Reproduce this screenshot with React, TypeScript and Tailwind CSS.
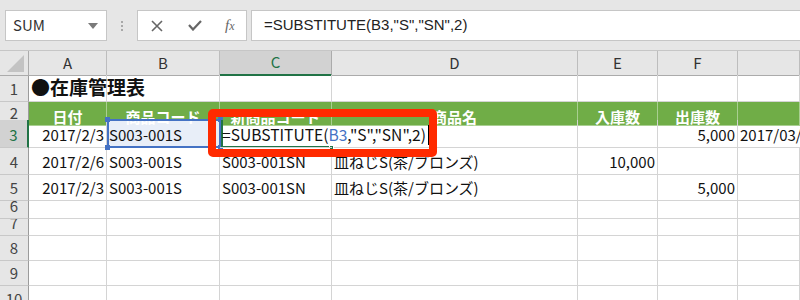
import React from 'react';

const font = { fontFamily: '"Noto Sans CJK JP", "Noto Sans", sans-serif' };

const cols = 'grid grid-cols-[29px_78px_113px_112px_246px_80px_80px_1fr]';

type Cell = { text?: React.ReactNode; align?: 'left' | 'right' | 'center'; cls?: string };

const Row = ({
  label,
  h,
  cells,
  selected,
  green,
}: {
  label: string;
  h: string;
  cells: Cell[];
  selected?: boolean;
  green?: boolean;
}) => (
  <div className={`${cols} ${h}`}>
    <div
      className={`flex items-end justify-center overflow-hidden border-b border-b-[#c8c8c8] text-[15px] leading-[22px] text-[#444] ${
        selected ? 'bg-[#d2d2d2] border-r-2 border-r-[#217346] text-[#217346]' : 'bg-[#e6e6e6] border-r border-r-[#9b9b9b]'
      }`}
    >
      <span className="pb-[1px]">{label}</span>
    </div>
    {Array.from({ length: 7 }).map((_, i) => {
      const c = cells[i] || {};
      const align = c.align === 'right' ? 'justify-end pr-[2px]' : c.align === 'center' ? 'justify-center' : 'justify-start pl-[2px]';
      return (
        <div
          key={i}
          className={`flex items-end whitespace-nowrap border-b border-r ${
            green ? 'border-[#a9cf91] bg-[#70ad47] font-bold text-white' : 'border-[#d4d4d4] text-[#111]'
          } ${align} ${c.cls || ''}`}
        >
          <span className="pb-[1px] leading-[22px]">{c.text}</span>
        </div>
      );
    })}
  </div>
);

export default function App() {
  return (
    <div className="relative h-[300px] w-[800px] overflow-hidden bg-white text-[15px]" style={font}>
      {/* toolbar */}
      <div className="flex h-[51px] items-center gap-[4px] border-b border-[#c6c6c6] bg-[#e6e6e6] pl-[5px] pt-[1px]">
        <div className="flex h-[31px] w-[102px] items-center justify-between border border-[#c6c6c6] bg-white pl-[7px] pr-[8px] text-[15px] text-[#333]">
          <span>SUM</span>
          <svg width="10" height="6" viewBox="0 0 10 6">
            <path d="M0 0 L10 0 L5 6 Z" fill="#7a7a7a" />
          </svg>
        </div>
        <div className="flex w-[22px] flex-col items-center gap-[2px]">
          <span className="h-[2px] w-[2px] bg-[#a8a8a8]" />
          <span className="h-[2px] w-[2px] bg-[#a8a8a8]" />
          <span className="h-[2px] w-[2px] bg-[#a8a8a8]" />
        </div>
        <div className="flex h-[31px] w-[110px] items-center border border-[#c6c6c6] bg-white text-[#666]">
          <svg className="ml-[13px]" width="12" height="12" viewBox="0 0 12 12">
            <path d="M1 1 L11 11 M11 1 L1 11" stroke="#666" strokeWidth="1.6" />
          </svg>
          <svg className="ml-[25px]" width="14" height="11" viewBox="0 0 14 11">
            <path d="M1 5 L5 9.5 L13 1" stroke="#666" strokeWidth="2.2" fill="none" />
          </svg>
          <span className="ml-[23px] text-[15px] italic text-[#666]" style={{ fontFamily: '"Liberation Serif", serif' }}>
            f<span className="text-[12px]">x</span>
          </span>
        </div>
        <div className="flex h-[31px] flex-1 items-center border border-r-0 border-[#c6c6c6] bg-white pl-[12px] text-[15px] text-[#222]" style={{ fontFamily: '"Liberation Sans", sans-serif' }}>
          =SUBSTITUTE(B3,"S","SN",2)
        </div>
      </div>

      {/* column headers */}
      <div className={`${cols} h-[24px] bg-[#e6e6e6] text-[15px] text-[#333]`}>
        <div className="relative border-b border-r border-[#ababab]">
          <svg className="absolute bottom-[3px] right-[4px]" width="17" height="17" viewBox="0 0 17 17">
            <path d="M17 0 L17 17 L0 17 Z" fill="#c3c3c3" />
          </svg>
        </div>
        {['A', 'B', 'C', 'D', 'E', 'F', ''].map((c, i) => (
          <div
            key={i}
            className={`flex items-center justify-center border-r ${
              c === 'C' ? 'border-b-2 border-b-[#217346] border-r-[#ababab] bg-[#d2d2d2] text-[#217346]' : 'border-b border-b-[#ababab] border-r-[#bdbdbd]'
            }`}
          >
            {c}
          </div>
        ))}
      </div>

      <Row label="1" h="h-[27px]" cells={[{ text: <span className="text-[19px] font-bold">●在庫管理表</span> }]} />
      <Row
        label="2"
        h="h-[18px]"
        green
        cells={[
          { text: <span className="relative top-[4px]">日付</span>, align: 'center' },
          { text: <span className="relative top-[4px]">商品コード</span>, align: 'center' },
          { text: <span className="relative top-[4px]">新商品コード</span>, align: 'center' },
          { text: <span className="relative top-[4px]">商品名</span>, align: 'center' },
          { text: <span className="relative top-[4px]">入庫数</span>, align: 'center' },
          { text: <span className="relative top-[4px]">出庫数</span>, align: 'center' },
          {},
        ]}
      />
      <Row
        label="3"
        h="h-[28px]"
        selected
        cells={[
          { text: '2017/2/3', align: 'right' },
          { text: 'S003-001S', cls: 'bg-[#e8eef8]' },
          {
            text: (
              <span className="relative text-[15.6px]">
                =SUBSTITUTE(<span className="text-[#4472c4]">B3</span>,"S","SN",2)
                <span className="absolute -right-[3px] top-[2px] h-[20px] w-[1px] bg-black" />
              </span>
            ),
            cls: 'relative z-10 overflow-visible border-r-0',
          },
          {},
          {},
          { text: '5,000', align: 'right' },
          { text: '2017/03/' },
        ]}
      />
      <Row
        label="4"
        h="h-[27px]"
        cells={[
          { text: '2017/2/6', align: 'right' },
          { text: 'S003-001S' },
          { text: 'S003-001SN' },
          { text: '皿ねじS(茶/ブロンズ)' },
          { text: '10,000', align: 'right' },
          {},
          {},
        ]}
      />
      <Row
        label="5"
        h="h-[26px]"
        cells={[
          { text: '2017/2/3', align: 'right' },
          { text: 'S003-001S' },
          { text: 'S003-001SN' },
          { text: '皿ねじS(茶/ブロンズ)' },
          {},
          { text: '5,000', align: 'right' },
          {},
        ]}
      />
      <Row label="6" h="h-[18px]" cells={[]} />
      <Row label="7" h="h-[17px]" cells={[]} />
      <Row label="8" h="h-[25px]" cells={[]} />
      <Row label="9" h="h-[25px]" cells={[]} />
      <Row label="10" h="h-[26px]" cells={[]} />

      {/* B3 reference highlight */}
      <div className="absolute left-[107px] top-[119px] h-[29px] w-[114px] border-2 border-[#4472c4]" />
      {[
        'left-[105px] top-[117px]',
        'left-[218px] top-[117px]',
        'left-[105px] top-[145px]',
        'left-[218px] top-[145px]',
      ].map((p) => (
        <div key={p} className={`absolute ${p} h-[5px] w-[5px] bg-[#4472c4]`} />
      ))}
      {/* C3 active cell */}
      <div className="absolute left-[221px] top-[120px] h-[28px] w-[2px] bg-[#217346]" />
      <div className="absolute left-[221px] top-[146px] h-[2px] w-[108px] bg-[#217346]" />
      <div className="absolute left-[329px] top-[145px] h-[5px] w-[5px] border border-white bg-[#217346]" />

      {/* red callout */}
      <div className="absolute left-[208px] top-[109px] h-[48px] w-[229px] rounded-[5px] border-[8px] border-[#ff2a00]" />
    </div>
  );
}
